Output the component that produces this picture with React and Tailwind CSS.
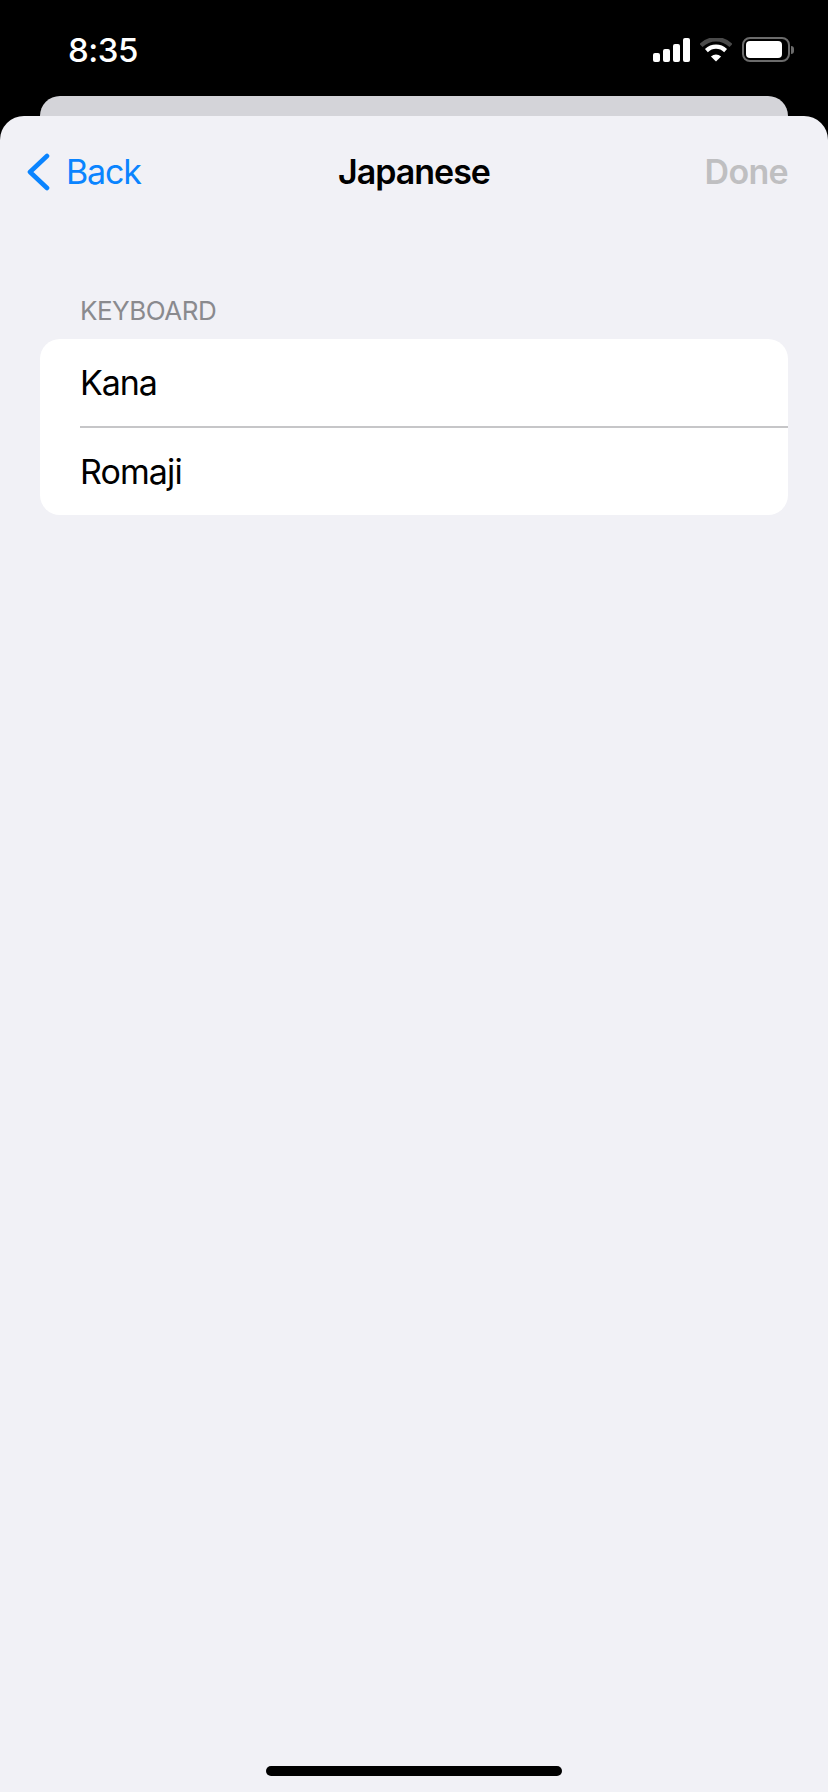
import React from 'react';

const StatusIcons = () => (
  <div className="flex items-center">
    {/* signal */}
    <svg width="37" height="24" viewBox="0 0 37 24" className="block">
      <rect x="0" y="15" width="7" height="9" rx="2" fill="#fff" />
      <rect x="10" y="11" width="7" height="13" rx="2" fill="#fff" />
      <rect x="20" y="6" width="7" height="18" rx="2" fill="#fff" />
      <rect x="30" y="0" width="7" height="24" rx="2" fill="#fff" />
    </svg>
    {/* wifi, outer arc is dimmed */}
    <svg width="32" height="24" viewBox="0 0 32 24" className="block ml-[10px]">
      <path d="M1 7.5C9.5 -0.8 22.5 -0.8 31 7.5" fill="none" stroke="#4a4a4a" strokeWidth="4.4" />
      <path d="M6.4 12.6C12 7.4 20 7.4 25.6 12.6" fill="none" stroke="#fff" strokeWidth="4.2" />
      <path d="M16 23.6L10.9 18.4C14 15.7 18 15.7 21.1 18.4Z" fill="#fff" />
    </svg>
    {/* battery */}
    <div className="flex items-center ml-[10px]">
      <div className="w-[48px] h-[25px] rounded-[8px] border-2 border-[#6b6b6b] p-[2px]">
        <div className="w-[36px] h-full rounded-[4px] bg-white" />
      </div>
      <div className="w-[3px] h-[8px] ml-[1px] rounded-r-[3px] bg-[#6b6b6b]" />
    </div>
  </div>
);

export default function App() {
  return (
    <div className="w-[828px] h-[1792px] flex flex-col bg-black font-['Inter',sans-serif] overflow-hidden">
      {/* Status bar */}
      <div className="h-[96px] flex items-start justify-between pt-[37px] pl-[68px] pr-[34px] shrink-0">
        <span className="text-white text-[33px] leading-[26px] font-medium tracking-[-0.5px]">8:35</span>
        <StatusIcons />
      </div>

      {/* Sheet behind */}
      <div className="h-[20px] mx-[40px] rounded-t-[20px] bg-[#d4d4d9] shrink-0" />

      {/* Sheet */}
      <div className="flex-1 flex flex-col rounded-t-[24px] bg-[#f1f1f6]">
        <div className="h-[112px] grid grid-cols-3 items-center px-[26px] shrink-0">
          <div className="flex items-center">
            <svg width="24" height="38" viewBox="0 0 24 38" className="block">
              <path d="M21 3L4 19L21 35" fill="none" stroke="#0a84ff" strokeWidth="4.6" strokeLinecap="round" strokeLinejoin="round" />
            </svg>
            <span className="ml-[16px] text-[34px] leading-[40px] tracking-[-1.2px] text-[#0a84ff]">Back</span>
          </div>
          <div className="text-center text-[34px] leading-[40px] font-semibold tracking-[-1px] text-black">Japanese</div>
          <div className="pr-[14px] text-right text-[34px] leading-[40px] font-semibold tracking-[-0.7px] text-[#bfbfc1]">Done</div>
        </div>

        <div className="pl-[80px] pt-[67px] pb-[13px] text-[26px] leading-[31px] tracking-[-0.5px] text-[#8a8a8e]">KEYBOARD</div>

        <div className="mx-[40px] rounded-[20px] bg-white">
          <div className="h-[87px] flex items-center pl-[40px] text-[34px] tracking-[-1.1px] text-black">Kana</div>
          <div className="ml-[40px] h-[2px] bg-[#c6c6c8]" />
          <div className="h-[87px] flex items-center pl-[40px] text-[34px] tracking-[-0.9px] text-black">Romaji</div>
        </div>

        <div className="mt-auto mb-[16px] mx-auto w-[296px] h-[10px] rounded-full bg-black" />
      </div>
    </div>
  );
}
